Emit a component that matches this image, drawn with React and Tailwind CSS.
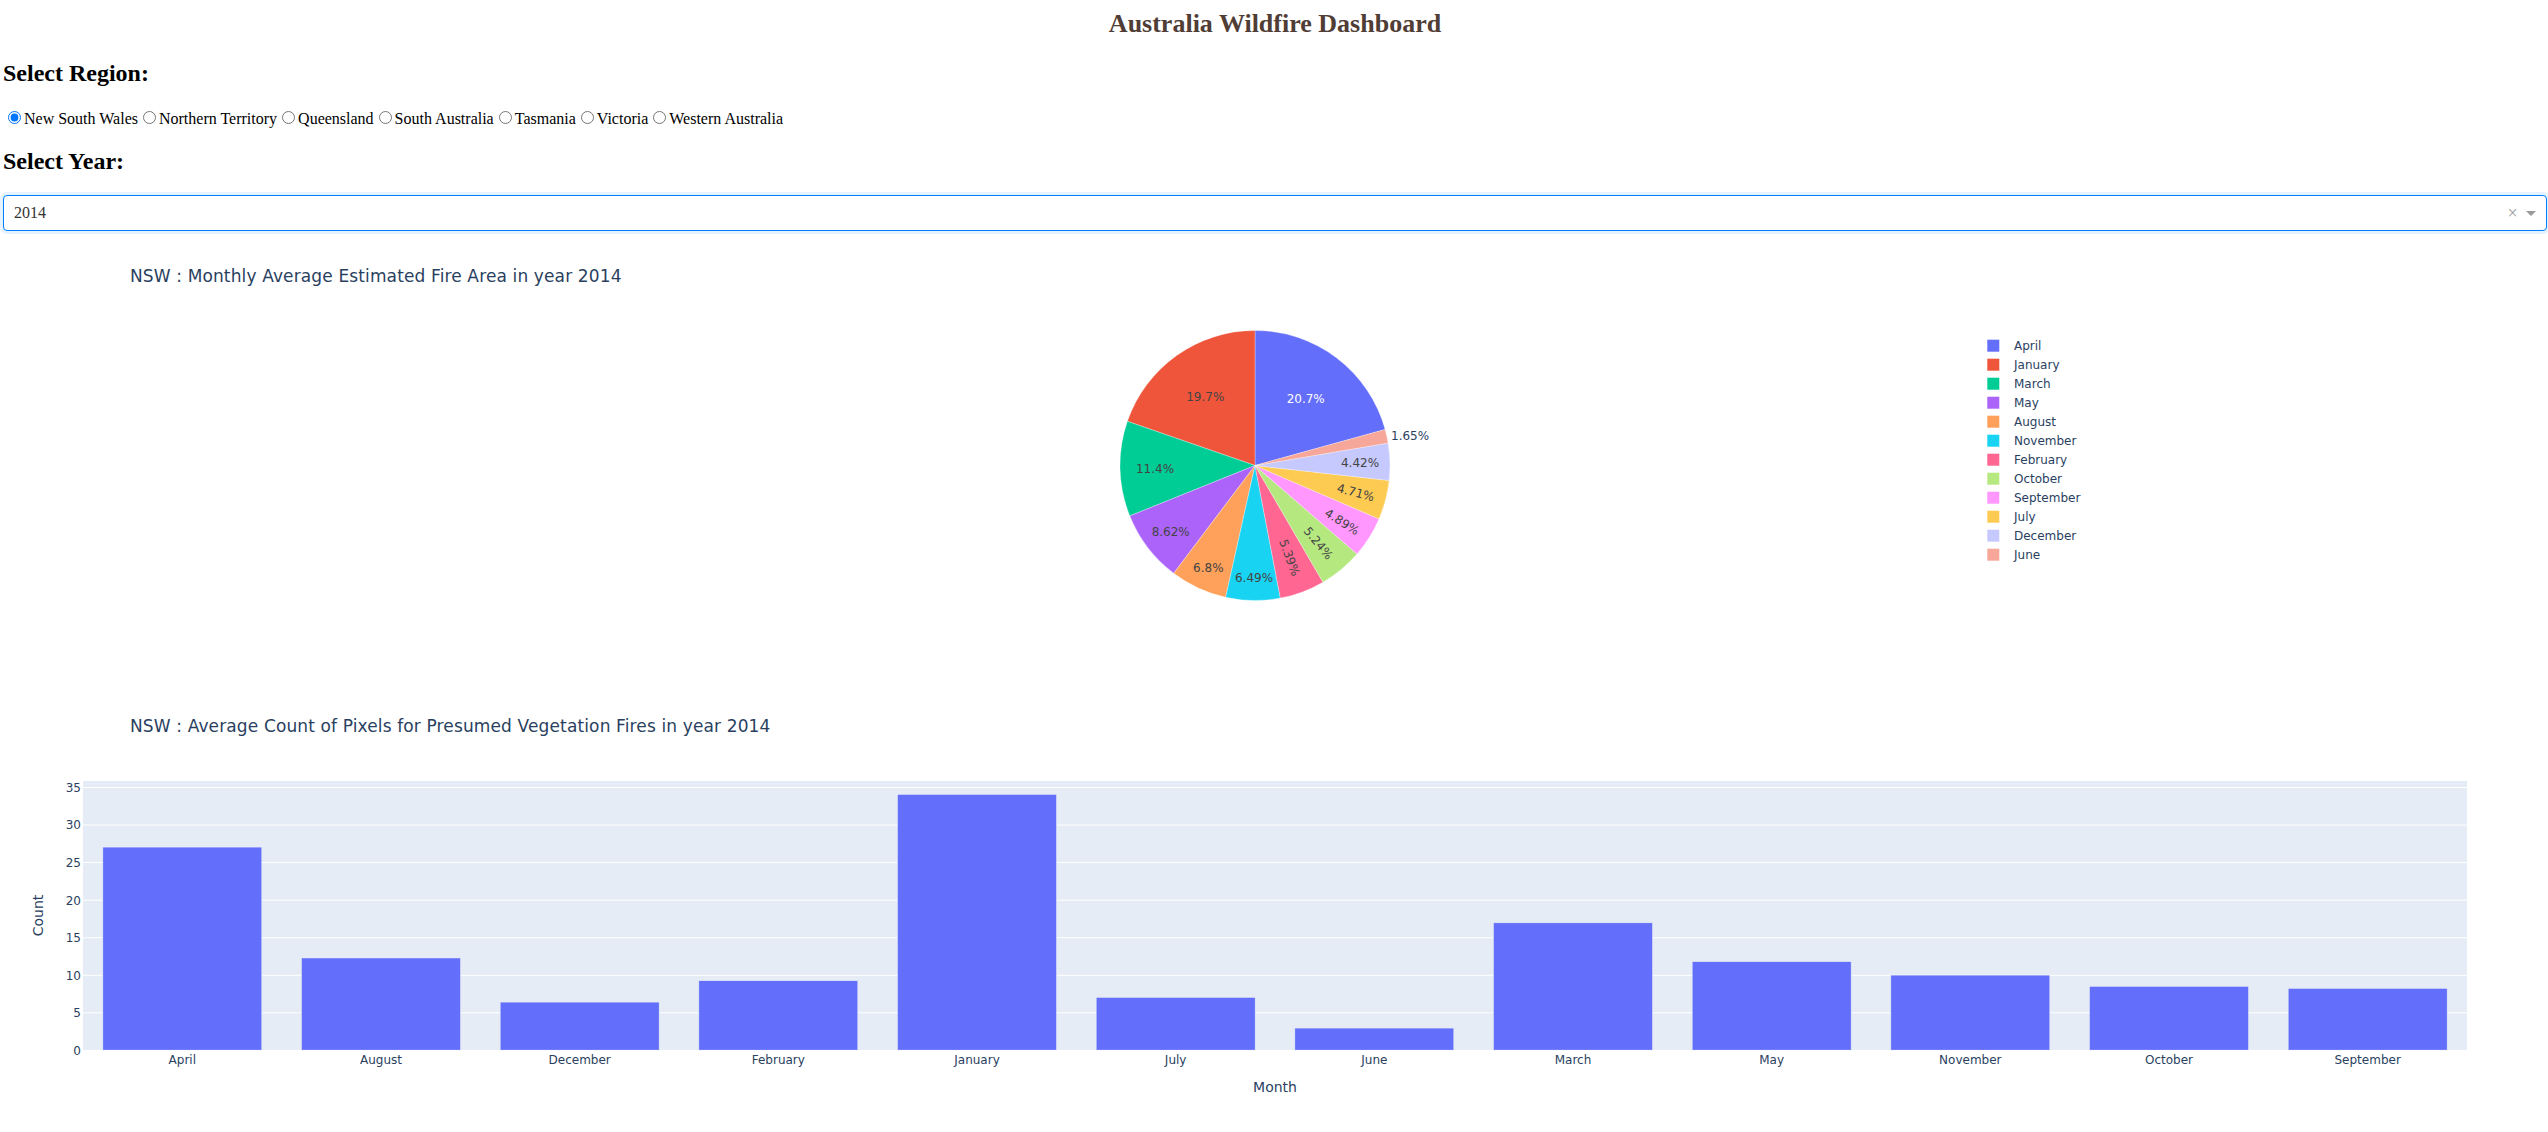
import React from "react";

const CHART_FONT = "'DejaVu Sans', Verdana, sans-serif";
const AXIS = "#2a3f5f";

const regions = [
  "New South Wales",
  "Northern Territory",
  "Queensland",
  "South Australia",
  "Tasmania",
  "Victoria",
  "Western Australia",
];

const pieData = [
  ["April", 20.7, "#636efa"],
  ["January", 19.7, "#EF553B"],
  ["March", 11.4, "#00cc96"],
  ["May", 8.62, "#ab63fa"],
  ["August", 6.8, "#FFA15A"],
  ["November", 6.49, "#19d3f3"],
  ["February", 5.39, "#FF6692"],
  ["October", 5.24, "#B6E880"],
  ["September", 4.89, "#FF97FF"],
  ["July", 4.71, "#FECB52"],
  ["December", 4.42, "#c6c9fd"],
  ["June", 1.65, "#f7a799"],
];

const pieLabels = [
  ["20.7%", 1302.7, 167.7, 0, "#ffffff"],
  ["19.7%", 1202.3, 166, 0, "#444444"],
  ["11.4%", 1152, 237.7, 0, "#444444"],
  ["8.62%", 1167.7, 300.7, 0, "#444444"],
  ["6.8%", 1205.3, 337, 0, "#444444"],
  ["6.49%", 1251, 347.3, 0, "#444444"],
  ["5.39%", 1286.3, 326.7, 69.5, "#444444"],
  ["5.24%", 1315.3, 312.3, 50.3, "#444444"],
  ["4.89%", 1339, 291, 32.1, "#444444"],
  ["4.71%", 1352.7, 261.7, 14.8, "#444444"],
  ["4.42%", 1357, 232.3, 0, "#444444"],
];

const barData = [
  ["April", 27.06],
  ["August", 12.3],
  ["December", 6.43],
  ["February", 9.27],
  ["January", 34.07],
  ["July", 7.05],
  ["June", 2.97],
  ["March", 16.98],
  ["May", 11.8],
  ["November", 10.02],
  ["October", 8.52],
  ["September", 8.25],
];

function PieChart() {
  const cx = 1252;
  const cy = 234.5;
  const r = 135;
  const total = pieData.reduce((s, d) => s + d[1], 0);
  let cur = (360 * pieData[0][1]) / total;
  const pt = (a) => [
    cx + r * Math.sin((a * Math.PI) / 180),
    cy - r * Math.cos((a * Math.PI) / 180),
  ];
  const slices = pieData.map(([name, p, color]) => {
    const a1 = cur;
    const a0 = cur - (360 * p) / total;
    cur = a0;
    const [x0, y0] = pt(a0);
    const [x1, y1] = pt(a1);
    const large = a1 - a0 > 180 ? 1 : 0;
    return {
      name,
      color,
      d: `M${cx},${cy}L${x0},${y0}A${r},${r} 0 ${large} 1 ${x1},${y1}Z`,
    };
  });
  return (
    <svg width={2544} height={450} className="block" style={{ fontFamily: CHART_FONT }}>
      <text x={127} y={50.7} fontSize={17} fill={AXIS} letterSpacing={0.13}>
        NSW : Monthly Average Estimated Fire Area in year 2014
      </text>
      {slices.map((s) => (
        <path key={s.name} d={s.d} fill={s.color} stroke="#ffffff" strokeWidth={0.3} />
      ))}
      {pieLabels.map(([t, x, y, rot, fill]) => (
        <text
          key={t}
          x={x}
          y={y}
          fontSize={12}
          fill={fill}
          textAnchor="middle"
          dominantBaseline="central"
          transform={rot ? `rotate(${rot} ${x} ${y})` : undefined}
        >
          {t}
        </text>
      ))}
      <text x={1388} y={209.3} fontSize={12} fill={AXIS}>
        1.65%
      </text>
      {pieData.map(([name, , color], i) => (
        <g key={name}>
          <rect x={1984.3} y={108.7 + 19 * i} width={12} height={12} fill={color} />
          <text x={2011} y={119 + 19 * i} fontSize={12} fill={AXIS}>
            {name}
          </text>
        </g>
      ))}
    </svg>
  );
}

function BarChart() {
  const left = 80;
  const top = 100;
  const width = 2384;
  const bottom = 369.4;
  const yMax = 35.86;
  const scale = (bottom - top) / yMax;
  const y = (v) => bottom - v * scale;
  const cat = width / barData.length;
  const ticks = [0, 5, 10, 15, 20, 25, 30, 35];
  return (
    <svg width={2544} height={450} className="block" style={{ fontFamily: CHART_FONT }}>
      <text x={127} y={50.7} fontSize={17} fill={AXIS} letterSpacing={0.13}>
        NSW : Average Count of Pixels for Presumed Vegetation Fires in year 2014
      </text>
      <rect x={left} y={top} width={width} height={bottom - top} fill="#E5ECF6" />
      {ticks.slice(1).map((t) => (
        <line key={t} x1={left} x2={left + width} y1={y(t)} y2={y(t)} stroke="#ffffff" strokeWidth={1} />
      ))}
      {barData.map(([name, v], i) => (
        <rect
          key={name}
          x={left + i * cat + cat * 0.1}
          y={y(v)}
          width={cat * 0.8}
          height={bottom - y(v)}
          fill="#636efa"
          stroke="#E5ECF6"
          strokeWidth={0.5}
        />
      ))}
      <line x1={left} x2={left + width} y1={bottom} y2={bottom} stroke="#ffffff" strokeWidth={1} />
      {ticks.map((t) => (
        <text key={t} x={78} y={y(t) + 4.4} fontSize={12} fill={AXIS} textAnchor="end">
          {t}
        </text>
      ))}
      {barData.map(([name], i) => (
        <text
          key={name}
          x={left + i * cat + cat / 2}
          y={383}
          fontSize={12}
          fill={AXIS}
          textAnchor="middle"
        >
          {name}
        </text>
      ))}
      <text x={left + width / 2} y={410.7} fontSize={14} fill={AXIS} textAnchor="middle">
        Month
      </text>
      <text
        x={0}
        y={0}
        fontSize={14}
        fill={AXIS}
        textAnchor="middle"
        transform="translate(39.7 234.5) rotate(-90)"
      >
        Count
      </text>
    </svg>
  );
}

export default function App() {
  return (
    <div className="w-full bg-white pl-[3px] pr-[1px] pb-[2px] font-['Liberation_Serif','Times_New_Roman',serif] text-black">
      <h1 className="pt-[9px] text-center text-[26px] leading-[30px] font-bold text-[#503D36]">
        Australia Wildfire Dashboard
      </h1>
      <h2 className="mt-[20px] text-[24px] leading-[28px] font-bold">Select Region:</h2>
      <div className="mt-[21px] text-[16px] leading-[20px]">
        {regions.map((r, i) => (
          <label key={r} className="inline">
            <input
              type="radio"
              name="region"
              defaultChecked={i === 0}
              className="ml-[5px] mr-[3px] mt-[3px] w-[13px] h-[13px] align-baseline"
            />
            {r}
          </label>
        ))}
      </div>
      <h2 className="mt-[18px] text-[24px] leading-[28px] font-bold">Select Year:</h2>
      <div className="mt-[20px] h-[36px] flex items-center rounded-[4px] border border-[#007eff] shadow-[0_0_0_3px_rgba(0,126,255,0.1)] bg-white">
        <div className="flex-1 pl-[10px] text-[16px] text-[#333333]">2014</div>
        <div className="w-[17px] flex justify-center text-[18px] leading-none text-[#999999]">×</div>
        <div className="w-[25px] pr-[5px] flex justify-center">
          <span className="block w-0 h-0 border-x-[5px] border-x-transparent border-t-[5px] border-t-[#999999]" />
        </div>
      </div>
      <PieChart />
      <BarChart />
    </div>
  );
}
